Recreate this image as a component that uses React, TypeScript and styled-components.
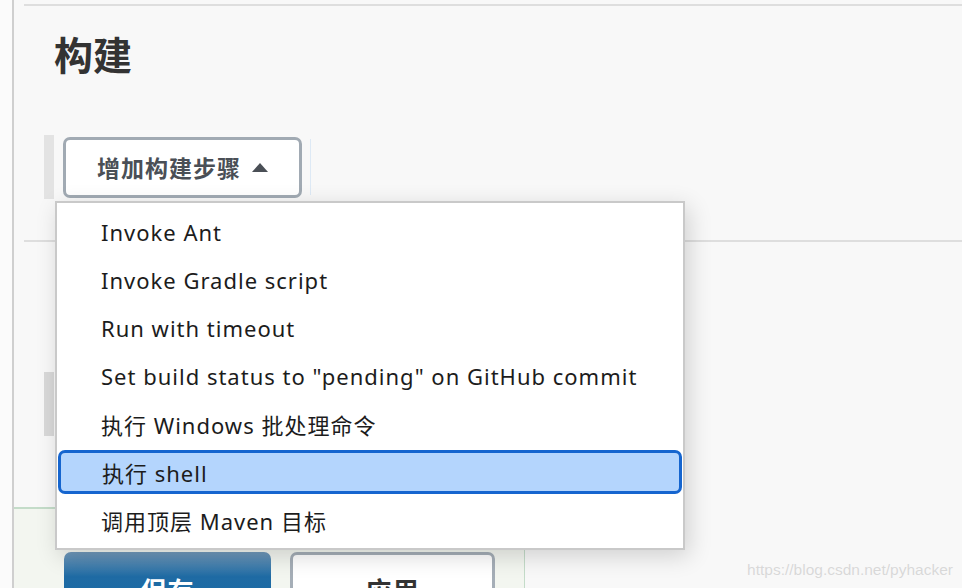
import styled, { createGlobalStyle } from 'styled-components';

const GlobalStyle = createGlobalStyle`
  html, body {
    margin: 0;
    padding: 0;
    background: #f8f8f8;
    overflow: hidden;
  }
  body {
    font-family: "Noto Sans", "Noto Sans CJK SC", sans-serif;
  }
`;

const Page = styled.div`
  position: relative;
  display: flex;
  width: 962px;
  height: 588px;
  overflow: hidden;
`;

const Gutter = styled.div`
  width: 12px;
  flex-shrink: 0;
  background: #fbfbfb;
  border-right: 2px solid #cfcfcf;
`;

const Main = styled.main`
  flex: 1;
  display: flex;
  flex-direction: column;
  padding-top: 4px;

  & > * {
    flex-shrink: 0;
  }
`;

const Rule = styled.div<{ $top: number }>`
  height: 2px;
  margin: ${(p) => p.$top}px 0 0 10px;
  background: #dedede;
`;

const Heading = styled.h2`
  margin: 26px 0 0 40px;
  font-size: 39px;
  line-height: 46px;
  font-weight: 700;
  color: #333;
`;

const ChunkRow = styled.div`
  position: relative;
  display: flex;
  align-items: center;
  gap: 8px;
  height: 64px;
  margin: 57px 0 0 30px;
  padding-left: 9px;
  border-left: 10px solid #e3e3e3;
`;

const AddButton = styled.button`
  display: flex;
  align-items: center;
  gap: 11px;
  width: 239px;
  height: 61px;
  padding: 0 0 0 31px;
  border: 3px solid #a1aab3;
  border-radius: 7px;
  background: #fff;
  font-family: inherit;
  font-size: 23px;
  font-weight: 700;
  letter-spacing: 1px;
  color: #4a4f56;
`;

const Caret = styled.span`
  width: 0;
  height: 0;
  border-left: 8.5px solid transparent;
  border-right: 8.5px solid transparent;
  border-bottom: 9px solid #4a4f56;
`;

const Divider = styled.div`
  width: 1px;
  height: 56px;
  background: #dde9f5;
`;

const Menu = styled.ul`
  position: absolute;
  top: 66px;
  left: 1px;
  z-index: 10;
  width: 626px;
  margin: 0;
  padding: 5px 0 4px;
  list-style: none;
  background: #fff;
  border: 2px solid #c9c9c9;
  box-shadow: 4px 6px 22px rgba(0, 0, 0, 0.16);
`;

const MenuItem = styled.li<{ $active?: boolean }>`
  display: flex;
  align-items: center;
  height: ${(p) => (p.$active ? '38px' : '48px')};
  margin: ${(p) => (p.$active ? '2px 1px' : '0')};
  padding-left: ${(p) => (p.$active ? '41px' : '44px')};
  font-size: 22px;
  letter-spacing: 1px;
  color: #1c1c1c;
  background: ${(p) => (p.$active ? '#b4d5fd' : 'transparent')};
  border: ${(p) => (p.$active ? '3px solid #1565cf' : 'none')};
  border-radius: ${(p) => (p.$active ? '7px' : '0')};
  white-space: nowrap;
`;

const GrayBlock = styled.div`
  width: 10px;
  height: 64px;
  margin: 130px 0 0 30px;
  background: #d9d9d9;
`;

const FormFooter = styled.div`
  display: flex;
  gap: 19px;
  width: 460px;
  height: 200px;
  margin: 71px 0 0 0;
  padding: 43px 0 0 50px;
  background: #f3f6f0;
  border-top: 2px solid #c4dcc9;
  border-right: 1px solid #c4dcc9;
`;

const FooterButton = styled.button<{ $primary?: boolean }>`
  width: ${(p) => (p.$primary ? '207px' : '205px')};
  height: 62px;
  border-radius: 7px;
  border: ${(p) => (p.$primary ? 'none' : '3px solid #a5aeb7')};
  background: ${(p) =>
    p.$primary ? 'linear-gradient(#7199ba, #1f6ba4 40%, #176aa6)' : '#fff'};
  color: ${(p) => (p.$primary ? '#fff' : '#333')};
  font-family: inherit;
  font-size: 26px;
  font-weight: 700;
  letter-spacing: 1px;
  padding-top: 14px;
`;

const Watermark = styled.div`
  position: absolute;
  right: 9px;
  bottom: 9px;
  font-family: "Liberation Sans", Arial, sans-serif;
  font-size: 15.5px;
  color: #d8d8d8;
  text-shadow: 0 0 1px #fff;
`;

const items = [
  'Invoke Ant',
  'Invoke Gradle script',
  'Run with timeout',
  'Set build status to "pending" on GitHub commit',
  '执行 Windows 批处理命令',
  '执行 shell',
  '调用顶层 Maven 目标',
];

export default function App() {
  return (
    <>
      <GlobalStyle />
      <Page>
        <Gutter />
        <Main>
          <Rule $top={0} />
          <Heading>构建</Heading>
          <ChunkRow>
            <AddButton>
              增加构建步骤
              <Caret />
            </AddButton>
            <Divider />
            <Menu>
              {items.map((item) => (
                <MenuItem key={item} $active={item === '执行 shell'}>
                  {item}
                </MenuItem>
              ))}
            </Menu>
          </ChunkRow>
          <Rule $top={41} />
          <GrayBlock />
          <FormFooter>
            <FooterButton $primary>保存</FooterButton>
            <FooterButton>应用</FooterButton>
          </FormFooter>
        </Main>
        <Watermark>https://blog.csdn.net/pyhacker</Watermark>
      </Page>
    </>
  );
}
